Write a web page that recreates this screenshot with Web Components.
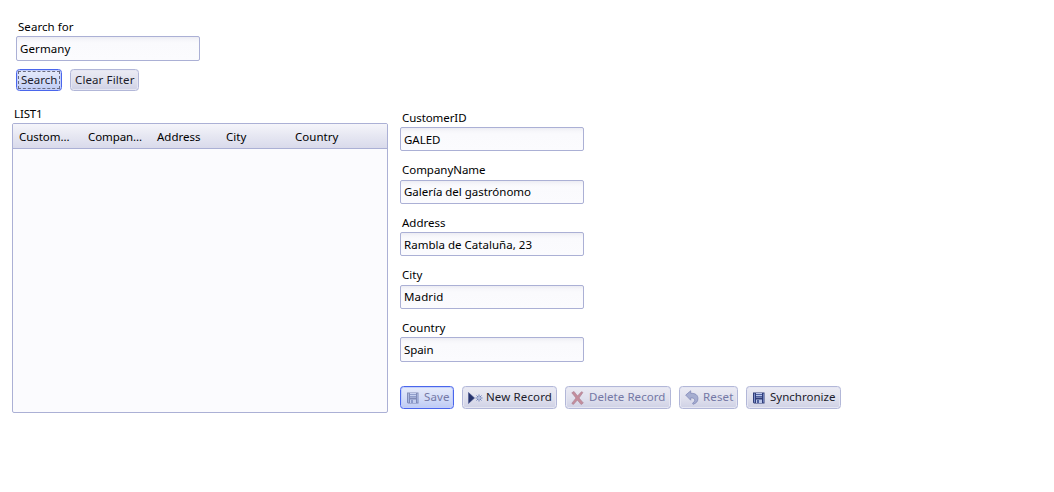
<!DOCTYPE html>
<html lang="en">
<head>
<meta charset="utf-8">
<title>Customers</title>
<style>
html,body{margin:0;background:#fff}
body{font:11.5px/16px "Noto Sans","Open Sans",sans-serif;color:#000;width:1054px;height:492px;overflow:hidden}
</style>
</head>
<body>
<customer-screen></customer-screen>
<script>
const define = (name, html, setup) => customElements.define(name, class extends HTMLElement {
  connectedCallback() {
    if (this.shadowRoot) return;
    const t = document.createElement('template');
    t.innerHTML = html;
    this.attachShadow({mode: 'open'}).append(t.content.cloneNode(true));
    if (setup) setup(this, this.shadowRoot);
  }
});

/* A single line of text tracked to a given width. */
define('fit-text', `<style>:host{display:block;white-space:nowrap}span{display:block;width:max-content}</style><span><slot></slot></span>`,
  (host, root) => {
    const span = root.querySelector('span');
    const w = +host.getAttribute('w');
    host.style.width = w + 'px';
    const n = host.textContent.length;
    span.style.letterSpacing = ((w - span.getBoundingClientRect().width) / n) + 'px';
  });

define('text-field', `<style>
:host{display:block;width:184px}
.label{box-sizing:border-box;height:18px;padding:var(--lt,1px) 0 0 2px}
.box{box-sizing:border-box;height:var(--h,24px);border:1px solid #abb0d5;border-radius:2px;padding:var(--vt,4px) 3px 0;
 background:linear-gradient(#ececf3,#f6f6fa 3px,#fafafd 6px,#fbfbfe)}
</style><div class="label"><slot name="label"></slot></div><div class="box"><slot></slot></div>`);

define('push-button', `<style>
:host{display:flex;box-sizing:border-box;height:23px;border:1px solid #b2b7d8;border-radius:3.5px;align-items:center;
 background:linear-gradient(#ebebf4,#dfe0ed 55%,#cfd1e5);box-shadow:inset 0 0 0 1px #e5e6f2;color:#1c1c2c;padding-left:5px;position:relative}
:host([active]){border-color:#4a66ec;background:linear-gradient(#e6ebfa,#d3dcf8 55%,#bdcaf4);box-shadow:inset 0 0 0 1px #c3cffa}
:host([disabled]){color:#7478a5}
:host([focused])::after{content:"";position:absolute;inset:1px;border:1px dashed #6a6c80}
::slotted(tool-icon){margin-right:var(--gap,4px)}
::slotted(fit-text){margin-bottom:var(--mb,0)}
</style><slot></slot>`);

const icons = {
  save: `<svg width="12" height="12" viewBox="0 0 12 12"><path fill="#303c78" d="M0 .5h11.5v11H1L0 10.5z"/><path fill="#7e91cb" d="M1 1.5h1v9H1zM10 1.5h.8v9H10z"/><path fill="#bac5e8" d="M3 1h6v4.5H3zM3 7.5h6V11H3z"/><path fill="#4e60a0" d="M3 2h6v1H3zM3 4h6v1H3zM4 8h2v3H4z"/></svg>`,
  add: `<svg width="15" height="12" viewBox="0 0 15 12"><path fill="#27346d" stroke="#48558f" stroke-width=".6" d="M.5.5 6.5 6l-6 5.5z"/><path stroke="#7183ba" stroke-width="1" d="M11 2.5v7M7.5 6h7M8.5 3.5l5 5M13.5 3.5l-5 5"/><circle cx="11" cy="6" r="1" fill="#cbd3ee"/></svg>`,
  remove: `<svg width="13" height="14" viewBox="0 0 13 14"><path fill="#c48d9c" stroke="#ad8496" stroke-width=".7" d="M.8 1.8 3 .5 6.5 5l4-4.3 1.4.8L8 7l4.3 5-2.2 1.5L6.4 9l-4 4.4-1.6-1L5 7z"/></svg>`,
  undo: `<svg width="14" height="15" viewBox="0 0 14 15"><path fill="#a5add0" stroke="#8189b7" stroke-width=".8" d="M.7 5.1 5.7.8v2.5c4.8-.2 7.4 2 7.2 5.6-.1 2.7-1.7 4.3-4.8 5.4l-.5-1.2c2-1.3 2.4-2.3 2-3.5-.4-1.2-1.5-1.8-3.9-1.7v2.3z"/></svg>`
};
define('tool-icon', `<style>:host{display:block;flex:none}:host([faded]){opacity:.5}svg{display:block}</style><div></div>`,
  (host, root) => { root.querySelector('div').innerHTML = icons[host.getAttribute('name')]; });

define('record-list', `<style>
:host{display:block;width:376px}
.title{height:17px;padding-left:2px}
.grid{box-sizing:border-box;height:290px;border:1px solid #abb0d5;border-radius:2px;background:#fbfbfe;overflow:hidden}
.head{box-sizing:border-box;height:25px;border-bottom:1px solid #abb0d5;background:linear-gradient(#f5f5fa,#e6e7f2 50%,#d9daeb);
 display:grid;grid-template-columns:repeat(5,69px);align-items:start;padding:5px 0 0 6px}
</style><div class="title"><slot name="title"></slot></div><div class="grid"><div class="head"><slot></slot></div></div>`);

define('customer-screen', `<style>
:host{display:block;padding:18px 0 0 12px}
.search{padding-left:4px;--h:25px}
.row{display:flex;gap:8px}
.search .row{margin-top:8px}
.main{display:flex;gap:12px;align-items:flex-start;margin-top:15px}
.form{display:grid;grid-template-rows:53px 52px 53px 52px 67px;padding-top:3px}
.form .row{--mb:2px}
.high{--lt:0px;--vt:3px}
.last{--h:25px}
</style>
<div class="search">
 <text-field><fit-text slot="label" w="55.5">Search for</fit-text><fit-text w="50.5">Germany</fit-text></text-field>
 <div class="row">
  <push-button active focused style="width:46px;height:22px;padding-left:4px"><fit-text w="36.5">Search</fit-text></push-button>
  <push-button style="width:69px;height:22px;padding-left:4px"><fit-text w="59.5">Clear Filter</fit-text></push-button>
 </div>
</div>
<div class="main">
 <record-list><fit-text slot="title" w="28.5">LIST1</fit-text>
  <fit-text w="50.5">Custom...</fit-text><fit-text w="54">Compan...</fit-text><fit-text w="43.5">Address</fit-text><fit-text w="20.5">City</fit-text><fit-text w="43.5">Country</fit-text>
 </record-list>
 <div class="form">
  <text-field><fit-text slot="label" w="64.5">CustomerID</fit-text><fit-text w="36.5">GALED</fit-text></text-field>
  <text-field class="high"><fit-text slot="label" w="83.5">CompanyName</fit-text><fit-text w="127">Galería del gastrónomo</fit-text></text-field>
  <text-field><fit-text slot="label" w="43.5">Address</fit-text><fit-text w="128">Rambla de Cataluña, 23</fit-text></text-field>
  <text-field class="high"><fit-text slot="label" w="20.5">City</fit-text><fit-text w="39.5">Madrid</fit-text></text-field>
  <text-field class="last"><fit-text slot="label" w="43.5">Country</fit-text><fit-text w="29.5">Spain</fit-text></text-field>
  <div class="row">
   <push-button active disabled style="width:54px;padding-left:6px;--gap:5px"><tool-icon name="save" faded></tool-icon><fit-text w="25.5">Save</fit-text></push-button>
   <push-button style="width:95px;--gap:3px"><tool-icon name="add"></tool-icon><fit-text w="66">New Record</fit-text></push-button>
   <push-button disabled style="width:106px;--gap:5px"><tool-icon name="remove"></tool-icon><fit-text w="76.5">Delete Record</fit-text></push-button>
   <push-button disabled style="width:59px;--gap:4px"><tool-icon name="undo"></tool-icon><fit-text w="30.5">Reset</fit-text></push-button>
   <push-button style="width:95px;padding-left:6px;--gap:5px"><tool-icon name="save"></tool-icon><fit-text w="65.5">Synchronize</fit-text></push-button>
  </div>
 </div>
</div>`);
</script>
</body>
</html>
